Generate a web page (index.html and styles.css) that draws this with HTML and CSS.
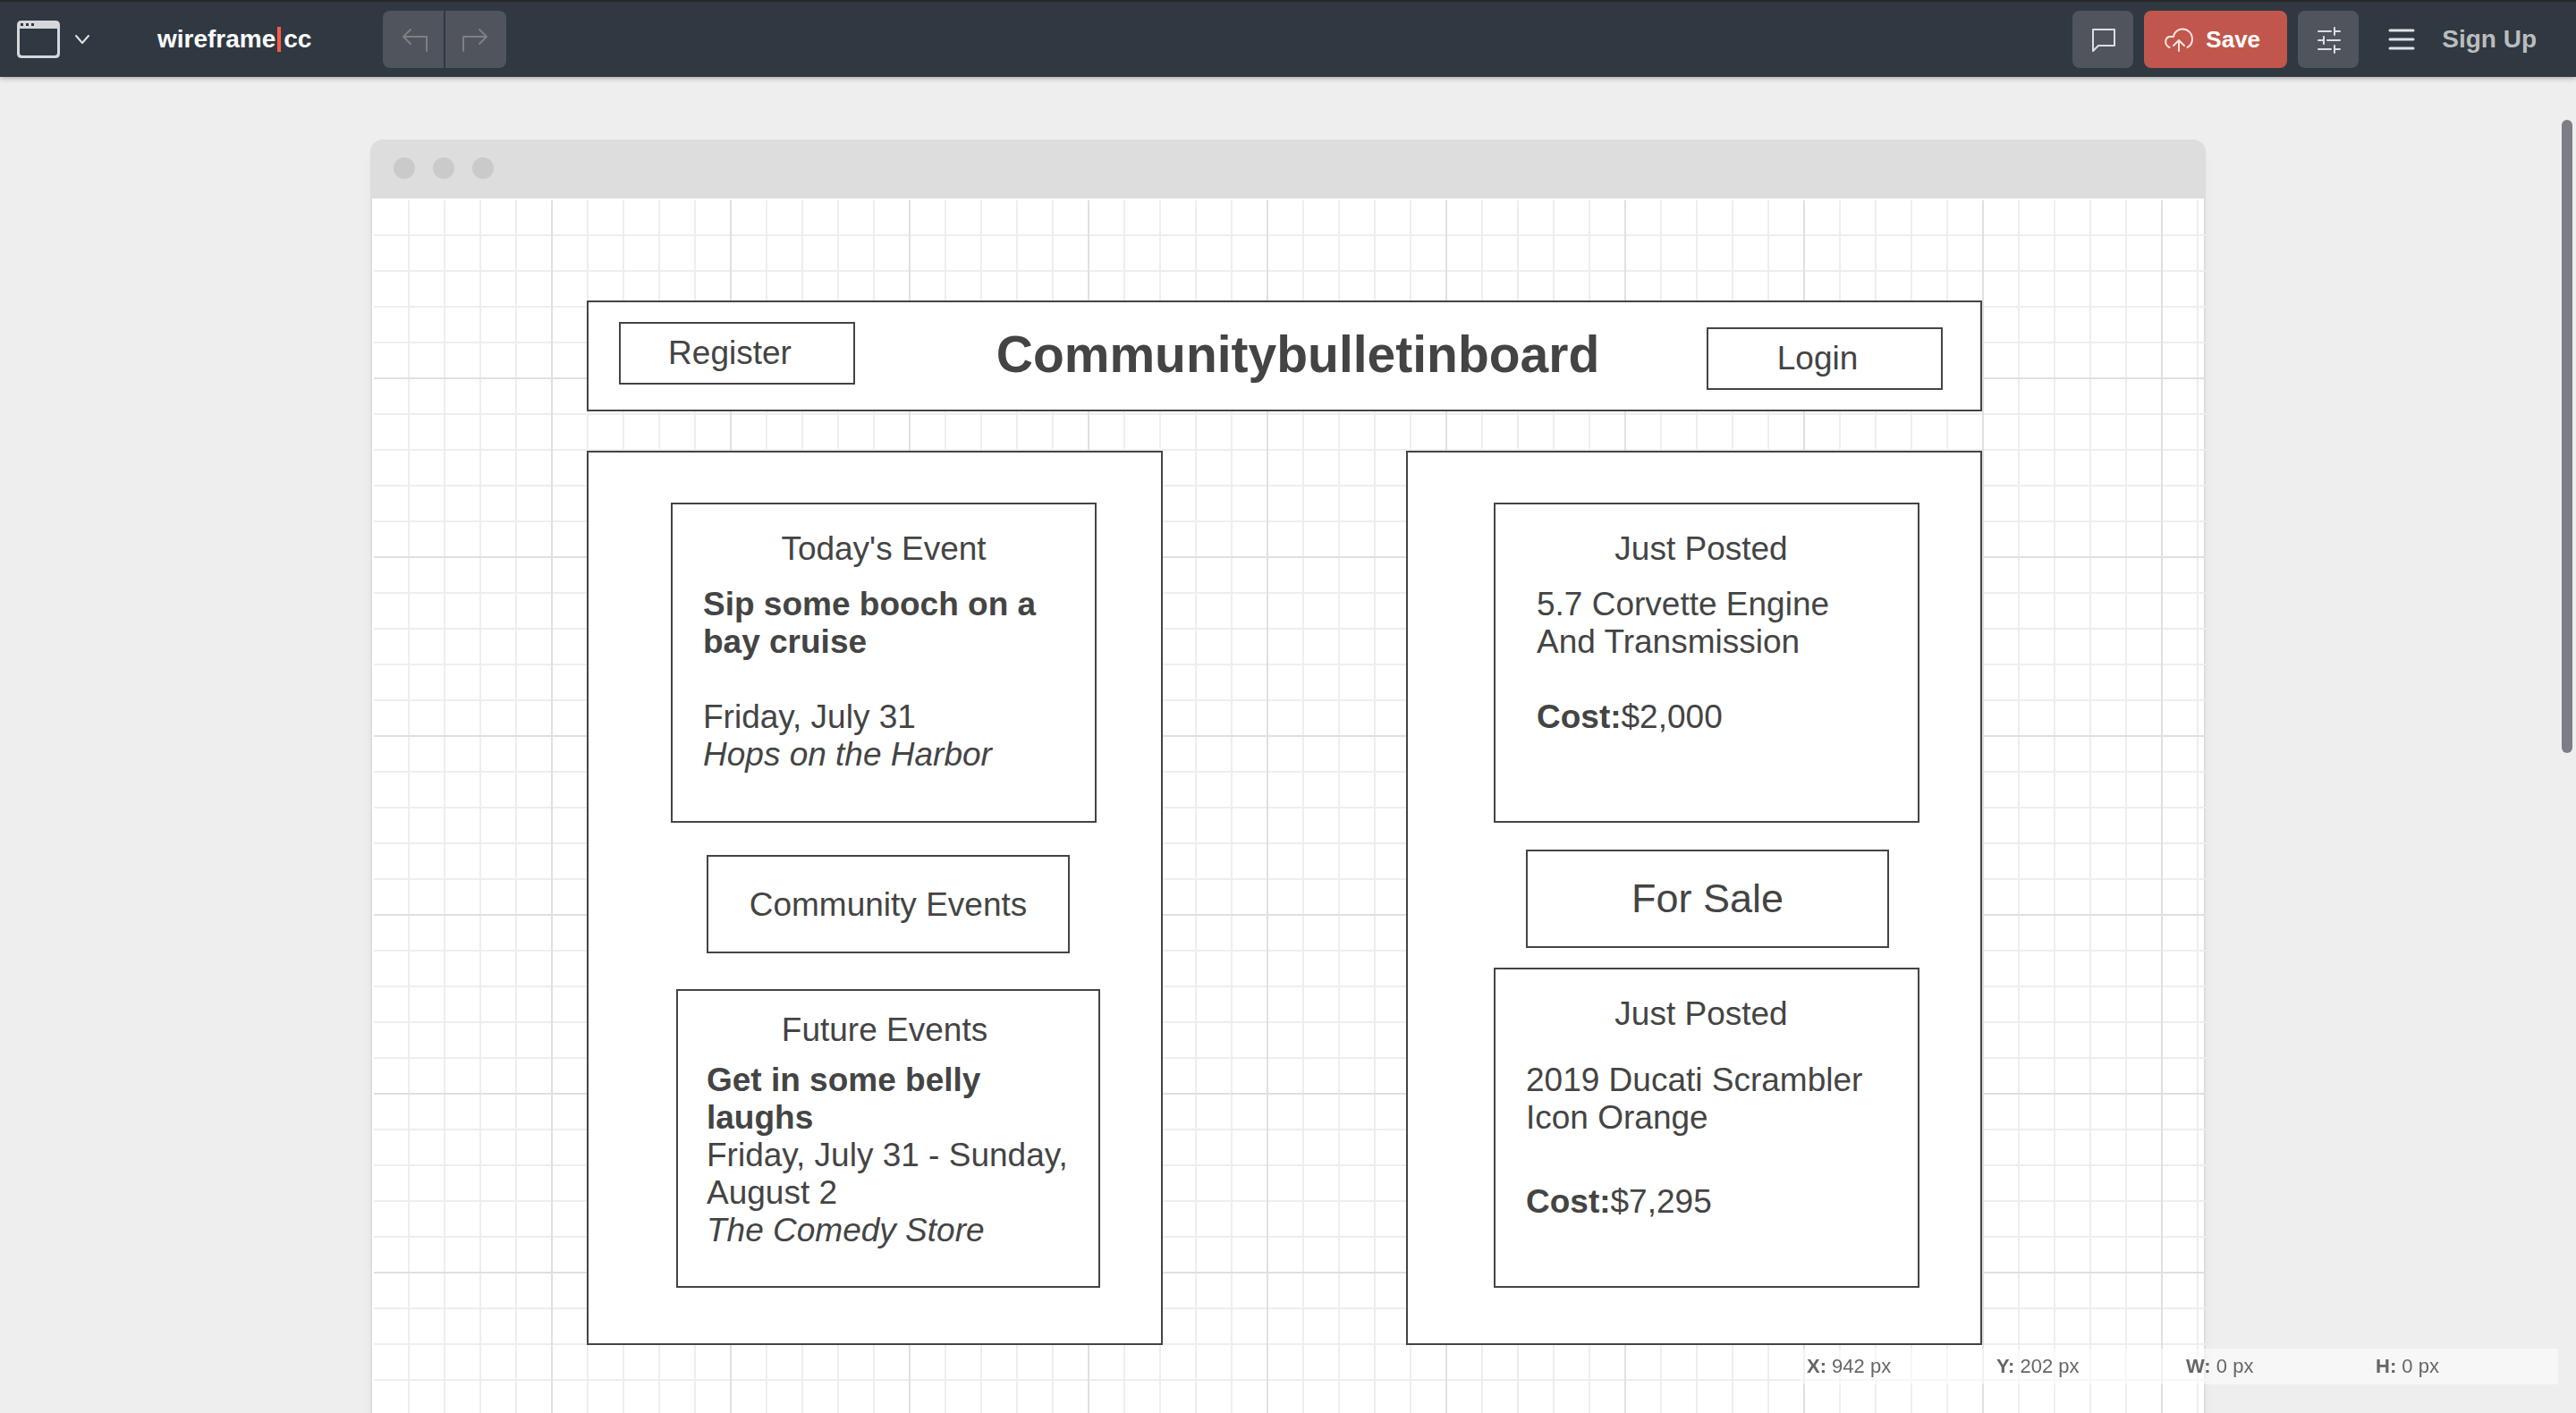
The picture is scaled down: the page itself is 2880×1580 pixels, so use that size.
FILE: index.html
```html
<!DOCTYPE html>
<html lang="en">
<head>
<meta charset="utf-8">
<title>wireframe|cc</title>
<link rel="stylesheet" href="styles.css">
</head>
<body>
<header class="toolbar">
  <button class="plain template" type="button" aria-label="Choose template">
    <svg width="48" height="42" viewBox="0 0 48 42"><path fill="#d5d8da" fill-rule="evenodd" d="M5 0H43Q48 0 48 5V37Q48 42 43 42H5Q0 42 0 37V5Q0 0 5 0ZM3 9V36Q3 39 6 39H42Q45 39 45 36V9ZM4 3V6H7V3ZM10 3V6H13V3ZM16 3V6H19V3Z"/></svg>
    <svg width="18" height="12" viewBox="0 0 18 12"><path class="line" d="M2 2L9 10L16 2"/></svg>
  </button>
  <a class="logo" href="#">wireframe<span class="caret"></span>cc</a>
  <div class="history">
    <button class="tool" type="button" aria-label="Undo" disabled>
      <svg width="32" height="32" viewBox="0 0 32 32"><path class="line" d="M13 5L5 13L13 21M5 13H31V29"/></svg>
    </button>
    <button class="tool" type="button" aria-label="Redo" disabled>
      <svg width="32" height="32" viewBox="0 0 32 32"><path class="line" d="M20 5L28 13L20 21M28 13H2V29"/></svg>
    </button>
  </div>
  <div class="actions">
    <button class="tool" type="button" aria-label="Comments">
      <svg width="32" height="32" viewBox="0 0 32 32"><path class="line" d="M5 5H29V23H11L5 29Z"/></svg>
    </button>
    <button class="tool save" type="button">
      <svg width="34" height="32" viewBox="0 0 34 32"><path class="line" d="M6.500 25C0 22 1 12 9 13H11C12 7 17 4.500 21 4.500C27 4.500 32 9 32 16C32 20 30 23 26.500 25M17 29V17M11 23L17 17L23 23"/></svg>
      <span>Save</span>
    </button>
    <button class="tool" type="button" aria-label="Settings">
      <svg width="32" height="32" viewBox="0 0 32 32"><path class="line" d="M5 7H19M24 7H29M23 3V11M5 17H10M15 17H29M11 13V21M5 27H19M24 27H29M23 23V31"/></svg>
    </button>
    <button class="plain menu" type="button" aria-label="Menu">
      <svg width="30" height="24" viewBox="0 0 30 24"><path class="line" d="M2 2H28M2 12H28M2 22H28"/></svg>
    </button>
    <a class="signup" href="#">Sign Up</a>
  </div>
</header>

<main class="stage">
  <section class="browser">
    <div class="titlebar"><i class="dot"></i><i class="dot"></i><i class="dot"></i></div>
    <div class="canvas">
      <div class="shape banner">
        <button class="shape small" type="button">Register</button>
        <h1 class="headline">Communitybulletinboard</h1>
        <button class="shape small login" type="button">Login</button>
      </div>
      <div class="columns">
        <section class="shape column">
          <article class="shape card">
            <h2 class="label">Today's Event</h2>
            <p class="copy"><b>Sip some booch on a<br>bay cruise</b><br><br>Friday, July 31<br><em>Hops on the Harbor</em></p>
          </article>
          <button class="shape big events" type="button">Community Events</button>
          <article class="shape card future">
            <h2 class="label">Future Events</h2>
            <p class="copy"><b>Get in some belly<br>laughs</b><br>Friday, July 31 - Sunday,<br>August 2<br><em>The Comedy Store</em></p>
          </article>
        </section>
        <section class="shape column sale">
          <article class="shape card engine">
            <h2 class="label">Just Posted</h2>
            <p class="copy">5.7 Corvette Engine<br>And Transmission<br><br><b>Cost:</b>$2,000</p>
          </article>
          <button class="shape big forsale" type="button">For Sale</button>
          <article class="shape card bike">
            <h2 class="label">Just Posted</h2>
            <p class="copy">2019 Ducati Scrambler<br>Icon Orange</p>
            <p class="copy"><b>Cost:</b>$7,295</p>
          </article>
        </section>
      </div>
    </div>
  </section>
</main>

<div class="status">
  <span><b>X:</b> 942 px</span>
  <span><b>Y:</b> 202 px</span>
  <span><b>W:</b> 0 px</span>
  <span><b>H:</b> 0 px</span>
</div>
<div class="thumb"></div>
</body>
</html>
```

FILE: styles.css
```css
* { box-sizing: border-box; }

body {
  margin: 0;
  height: 100vh;
  overflow: hidden;
  display: flex;
  flex-direction: column;
  background: #eee;
  color: #444;
  font-family: "Liberation Sans", Arial, sans-serif;
}

button {
  margin: 0;
  padding: 0;
  border: 0;
  background: none;
  color: inherit;
  font: inherit;
}

h1, h2, p { margin: 0; }
a { text-decoration: none; }
svg { display: block; flex: none; }

.line {
  fill: none;
  stroke: currentColor;
  stroke-width: 2;
  stroke-linecap: round;
  stroke-linejoin: round;
}
.menu .line { stroke-width: 3; }

/* Toolbar */
.toolbar {
  position: relative;
  z-index: 1;
  flex: none;
  display: flex;
  align-items: center;
  height: 86px;
  padding: 0 44px 0 19px;
  border-top: 2px solid #272727;
  background: #303841;
  box-shadow: 0 1px 6px rgba(0, 0, 0, .35);
}
.plain {
  display: flex;
  align-items: center;
  color: #dfe1e3;
}
.template { gap: 16px; }
.logo {
  display: flex;
  align-items: center;
  margin-left: 75px;
  color: #fff;
  font-size: 28px;
  line-height: 32px;
  font-weight: bold;
}
.caret {
  width: 4px;
  height: 28px;
  margin: 0 3px 0 2px;
  background: #ff5a45;
}
.history {
  display: flex;
  gap: 2px;
  margin-left: 80px;
}
.history .tool { color: #7e8080; }
.history .tool:first-child { border-radius: 8px 0 0 8px; }
.history .tool:last-child { border-radius: 0 8px 8px 0; }
.tool {
  display: flex;
  align-items: center;
  justify-content: center;
  width: 68px;
  height: 64px;
  border-radius: 8px;
  background: #50545d;
  color: #dcdee1;
}
.actions {
  display: flex;
  align-items: center;
  gap: 12px;
  margin-left: auto;
}
.save {
  width: 160px;
  gap: 13px;
  padding-right: 8px;
  background: #c1574c;
  color: #fbe3e0;
  font-size: 26px;
  font-weight: bold;
}
.save span { color: #fff; }
.menu { margin: 0 18px 0 21px; }
.signup {
  color: #bbbcbd;
  font-size: 28px;
  font-weight: bold;
}

/* Browser mock-up */
.stage {
  flex: 1;
  min-height: 0;
  padding-top: 70px;
}
.browser {
  max-width: 2052px;
  min-height: 100%;
  margin: 0 auto;
  display: flex;
  flex-direction: column;
  border: 2px solid #ddd;
  border-top: 0;
  border-radius: 14px 14px 0 0;
  background: #fff;
  box-shadow: 0 12px 12px rgba(0, 0, 0, .04);
}
.titlebar {
  display: flex;
  align-items: center;
  gap: 20px;
  height: 66px;
  padding: 0 24px 2px;
  border-radius: 12px 12px 0 0;
  background: #ddd;
}
.dot {
  width: 24px;
  height: 24px;
  border-radius: 50%;
  background: #cacaca;
}
.canvas {
  flex: 1;
  margin: 2px -2px 0 2px;
  padding: 112px 250px 112px 238px;
  background-image:
    linear-gradient(to left, #e0e0e0 2px, transparent 2px),
    linear-gradient(to top, #e0e0e0 2px, transparent 2px),
    linear-gradient(to left, #eee 2px, transparent 2px),
    linear-gradient(to top, #eee 2px, transparent 2px);
  background-size: 200px 200px, 200px 200px, 40px 40px, 40px 40px;
}

/* Wireframe shapes */
.shape {
  border: 2px solid #444;
  background: #fff;
  font-size: 37px;
  line-height: 42px;
}
.banner {
  display: grid;
  grid-template-columns: 264px 1fr 264px;
  align-items: start;
  height: 124px;
  padding: 22px 42px 0 34px;
}
.small {
  height: 70px;
  padding-right: 16px;
}
.login { margin-top: 6px; }
.headline {
  padding: 4px 0 0 38px;
  font-size: 57px;
  line-height: 64px;
  text-align: center;
}
.columns {
  display: flex;
  justify-content: space-between;
  margin-top: 44px;
}
.column {
  width: 644px;
  min-height: 1000px;
  padding: 56px 0 60px 92px;
}
.sale { padding-left: 96px; }
.card {
  width: 476px;
  min-height: 358px;
  padding: 29px 34px 28px;
}
.label {
  margin-bottom: 20px;
  font-size: 37px;
  line-height: 42px;
  font-weight: normal;
  text-align: center;
}
.big {
  display: block;
  width: 406px;
  height: 110px;
}
.events {
  margin: 36px 0 40px 40px;
  padding-top: 2px;
}
.forsale {
  margin: 30px 0 22px 36px;
  font-size: 45px;
}
.future {
  width: 474px;
  min-height: 334px;
  margin-left: 6px;
  padding: 23px 22px 22px 32px;
}
.future .label {
  margin-bottom: 14px;
  padding-right: 18px;
}
.engine .copy { padding-left: 12px; }
.sale .label { padding-right: 12px; }
.bike .label { margin-bottom: 32px; }
.bike .copy + .copy { margin-top: 52px; }

/* Overlays */
.status {
  position: fixed;
  z-index: 2;
  right: 20px;
  bottom: 32px;
  display: grid;
  grid-template-columns: repeat(4, 212px);
  background: rgba(255, 255, 255, .5);
  color: #666;
  font-size: 22px;
  line-height: 40px;
}
.status span { padding-left: 8px; }
.thumb {
  position: fixed;
  z-index: 2;
  top: 134px;
  right: 4px;
  width: 12px;
  height: 708px;
  border-radius: 6px;
  background: #7b7e86;
}
```
